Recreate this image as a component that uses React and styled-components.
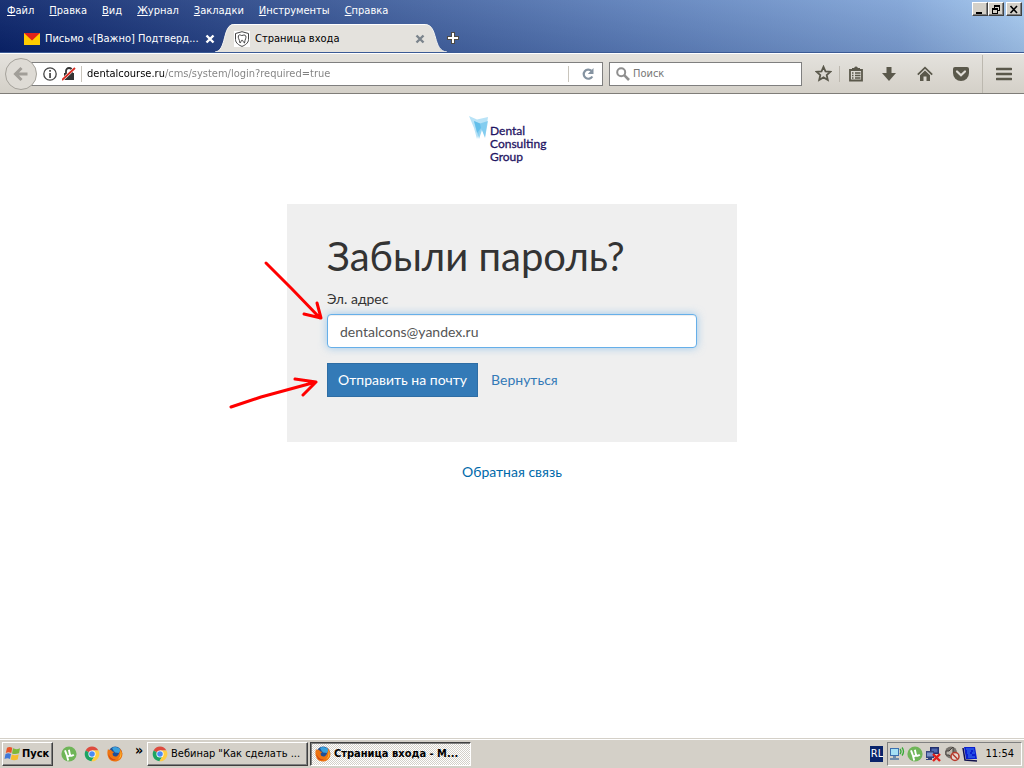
import React, { useState } from "react";
import styled, { createGlobalStyle, css } from "styled-components";

const uiFont = `"DejaVu Sans Condensed", "DejaVu Sans", sans-serif`;
const pageFont = `Lato, "Noto Sans", sans-serif`;

const GlobalStyle = createGlobalStyle`
    * { box-sizing: border-box; }
    body {
        margin: 0;
        background: #fff;
        font-family: ${pageFont};
        font-size: 14px;
        line-height: 20px;
        color: #333;
    }
    button, input { font: inherit; color: inherit; }
    svg { display: block; flex: none; }
`;

const raised = css`
    border: 1px solid;
    border-color: #fff #404040 #404040 #fff;
    box-shadow: inset -1px -1px 0 #808080;
`;

const Screen = styled.div`
    min-height: 100vh;
    display: flex;
    flex-direction: column;
`;

/* ---- browser ---- */

const Chrome = styled.header`
    font-family: ${uiFont};
    font-size: 11px;
    line-height: 14px;
`;
const TitleArea = styled.div`
    background:
        linear-gradient(to bottom, rgba(255, 255, 255, 0.07), rgba(0, 0, 40, 0.1)),
        linear-gradient(to right, #0a246a, #3a5998 35%, #5c7fba 62%, #7fa3d6 88%, #a6caf0);
    border-bottom: 1px solid #3b5a94;
`;
const MenuRow = styled.div`
    display: flex;
    justify-content: space-between;
    align-items: flex-start;
    height: 24px;
    padding: 2px 2px 0 7px;
`;
const Menu = styled.nav`
    display: flex;
    gap: 15px;
`;
const MenuItem = styled.button`
    padding: 2px 0 0;
    border: 0;
    background: none;
    color: #fff;

    &::first-letter { text-decoration: underline; }
`;
const WindowButtons = styled.div`
    display: flex;
`;
const WindowButton = styled.button`
    ${raised}
    width: 16px;
    height: 14px;
    padding: 0;
    margin-left: ${props => props.$apart ? "2px" : "0"};
    background: #d4d0c8;
    display: flex;
    align-items: center;
    justify-content: center;
`;
const Tabs = styled.div`
    display: flex;
    height: 28px;
`;
const Tab = styled.div`
    display: flex;
    align-items: center;
    gap: 5px;
    width: ${props => props.$active ? "191px" : "191px"};
    color: ${props => props.$active ? "#000" : "#fff"};
    background: ${props => props.$active ? "#e4e2dd" : "none"};
    border-top: 1px solid ${props => props.$active ? "#fff" : "transparent"};
`;
const FirstTab = styled(Tab)`
    margin-left: 24px;
`;
const TabTitle = styled.span`
    flex: 1;
    padding-top: 1px;
    overflow: hidden;
    white-space: nowrap;
`;
const PlainButton = styled.button`
    display: flex;
    align-items: center;
    justify-content: center;
    padding: 0;
    border: 0;
    background: none;
`;
const Toolbar = styled.div`
    display: flex;
    align-items: center;
    height: 41px;
    padding-left: 5px;
    border-top: 1px solid #fff;
    border-bottom: 1px solid #7f7d78;
    background: linear-gradient(to bottom, #e4e2dd, #d4d0c8);
`;
const BackButton = styled(PlainButton)`
    position: relative;
    width: 32px;
    height: 32px;
    border: 1px solid #a5a29b;
    border-radius: 50%;
    background: #dedbd5;
`;
const Field = styled.div`
    display: flex;
    align-items: center;
    height: 24px;
    border: 1px solid #7f7f7f;
    background: #fff;
`;
const UrlField = styled(Field)`
    flex: 1;
    margin-left: -6px;
    padding-left: 11px;
    gap: 5px;
`;
const SearchField = styled(Field)`
    width: 193px;
    margin-left: 6px;
    padding-left: 6px;
    gap: 3px;
`;
const FieldInput = styled.input`
    flex: 1;
    min-width: 0;
    padding: 1px 0 0;
    border: 0;
    outline: 0;
    background: none;

    &::placeholder { color: #777; opacity: 1; }
`;
const UrlInput = styled(FieldInput)`
    background: linear-gradient(to right, #000 77px, #808080 77px);
    background-clip: text;
    color: transparent;
`;
const Divider = styled.span`
    width: 1px;
    height: 16px;
    background: #c9c5bc;
`;
const ToolDivider = styled(Divider)`
    height: ${props => props.$tall ? "38px" : "16px"};
    margin-left: ${props => props.$tall ? "3px" : "0"};
    background: #bcb8af;
`;
const ReloadButton = styled(PlainButton)`
    width: 28px;
    height: 22px;
`;
const Tools = styled.div`
    display: flex;
    align-items: center;
    padding-left: 6px;
`;
const ToolButton = styled(PlainButton)`
    width: ${props => props.$wide ? "36px" : "31px"};
    height: 30px;
`;
const MenuButton = styled(ToolButton)`
    width: 41px;
`;

/* ---- page ---- */

const Page = styled.main`
    flex: 1;
    display: flex;
    flex-direction: column;
    align-items: center;
    padding: 21px 16px;
`;
const LogoLink = styled.a`
    margin-bottom: 41px;
`;
const Card = styled.form`
    position: relative;
    width: 100%;
    max-width: 450px;
    padding: 30px 40px 45px;
    margin-bottom: 20px;
    background: #efefef;
`;
const Title = styled.h1`
    margin: 0 0 10px;
    font-size: 40px;
    font-weight: 400;
    line-height: 45px;
`;
const Label = styled.label`
    display: block;
    margin-bottom: 5px;
`;
const EmailInput = styled.input`
    display: block;
    width: 100%;
    height: 34px;
    padding: 6px 12px;
    margin-bottom: 15px;
    border: 1px solid #66afe9;
    border-radius: 4px;
    outline: 0;
    background: #fff;
    color: #555;
    box-shadow: inset 0 1px 1px rgba(0, 0, 0, 0.075), 0 0 8px rgba(102, 175, 233, 0.6);
`;
const Actions = styled.div`
    display: flex;
    align-items: center;
    gap: 13px;
`;
const Submit = styled.button`
    min-width: 151px;
    height: 34px;
    padding: 0 10px;
    border: 1px solid #2e6da4;
    background: #337ab7;
    color: #fff;
`;
const Link = styled.a`
    color: ${props => props.$dark ? "#0069aa" : "#337ab7"};
    text-decoration: none;
`;
const Arrows = styled.svg`
    position: absolute;
    left: -60px;
    top: 50px;
    pointer-events: none;
`;

/* ---- taskbar ---- */

const Taskbar = styled.footer`
    display: flex;
    align-items: center;
    height: 30px;
    padding: 0 2px;
    border-top: 1px solid #d4d0c8;
    box-shadow: inset 0 1px 0 #fff;
    background: #d4d0c8;
    color: #000;
    font-family: ${uiFont};
    font-size: 11px;
    line-height: 14px;
`;
const StartButton = styled.button`
    ${raised}
    display: flex;
    align-items: center;
    gap: 1px;
    width: 51px;
    height: 24px;
    padding: 0 1px;
    background: #d4d0c8;
    font-weight: bold;
`;
const QuickLaunch = styled.div`
    display: flex;
    align-items: center;
    gap: 7px;
    margin: 0 8px;
`;
const More = styled(PlainButton)`
    width: 16px;
    height: 22px;
    align-items: flex-start;
    font-size: 14px;
    font-weight: bold;
`;
const TaskButton = styled.button`
    ${raised}
    display: flex;
    align-items: center;
    gap: 3px;
    width: 161px;
    height: 24px;
    padding: 0 4px;
    margin-right: 2px;
    background: #d4d0c8;
    white-space: nowrap;
    overflow: hidden;

    ${props => props.$pressed && css`
        border-color: #404040 #fff #fff #404040;
        box-shadow: inset 1px 1px 0 #808080;
        background: repeating-conic-gradient(#fff 0 25%, #d4d0c8 0 50%) 0 0 / 2px 2px;
        font-weight: bold;
    `}
`;
const Language = styled.span`
    width: 13px;
    height: 16px;
    margin: 0 4px 0 auto;
    background: #0a246a;
    color: #fff;
    line-height: 16px;
    text-align: center;
    overflow: hidden;
`;
const Tray = styled.div`
    display: flex;
    align-items: center;
    gap: 2px;
    height: 24px;
    padding: 0 7px 0 1px;
    border: 1px solid;
    border-color: #808080 #fff #fff #808080;
`;
const Clock = styled.time`
    margin-left: 5px;
`;

const CloseCross = ({ color }) => (
    <svg width="10" height="10" viewBox="0 0 10 10">
        <path d="M1.5 1.5 8.5 8.5M8.5 1.5 1.5 8.5" stroke={color} strokeWidth="2.4" />
    </svg>
);

const ChromeIcon = () => (
    <svg width="16" height="16" viewBox="0 0 16 16">
        <path d="M8 8 1.6 4.4A7.3 7.3 0 0 1 14.4 4.4H8Z" fill="#dd4b3e" />
        <path d="M8 8 1.6 4.4A7.3 7.3 0 0 0 7.4 15.2L11 9.5Z" fill="#1da462" />
        <path d="M8 4.4H14.4A7.3 7.3 0 0 1 7.4 15.2L11.2 9Z" fill="#ffcd42" />
        <circle cx="8" cy="8" r="3.6" fill="#fff" />
        <circle cx="8" cy="8" r="2.8" fill="#4a8af4" />
    </svg>
);

const FirefoxIcon = () => (
    <svg width="16" height="16" viewBox="0 0 16 16">
        <circle cx="8.2" cy="7.6" r="7" fill="#1f4f96" />
        <path d="M5 1.8A7 7 0 0 1 13.8 4L12 7 8 6.5 6 4Z" fill="#3aa0dc" />
        <path d="M1 3 2.2 4.2 4 3.5 5 5.2 7.2 6 5.5 7.5 6 9.5C8 11.5 10.5 10.5 11.5 8.5L13 5 12.8 2.6C16.5 6 16 11 13 13.7C9.5 16.6 4 16 1.7 12.2C.2 9.5 0 6 1 3Z" fill="#ee7410" />
        <path d="M13.5 4.5C15.5 8 14 12 11 13.5C13.5 11 14 8 13.5 4.5Z" fill="#ffcb3c" />
        <path d="M1.5 8C2.5 11.5 5 13.5 9 13.6C5.5 15.5 1.5 12.5 1.5 8Z" fill="#c9421a" />
    </svg>
);

const TorrentIcon = () => (
    <svg width="16" height="16" viewBox="0 0 16 16">
        <circle cx="8" cy="8" r="7.6" fill="#6fb558" />
        <path d="M4 4.3 5.8 9.2C6.4 10.7 9 10.5 8.9 8.5L7.9 3.7M8.9 8.5C9.5 10.5 11.5 9.8 12.8 8.8M6 9.8 7.2 14.5" fill="none" stroke="#fff" strokeWidth="1.9" />
    </svg>
);

const WindowsFlag = () => (
    <svg width="17" height="16" viewBox="0 0 17 16">
        <path d="M3 1.8Q5.5 .3 8.3 1.8L7.3 7Q4.500 5.600 1.800 7Z" fill="#e8542a" />
        <path d="M9 2.300Q12 4 16 2.200L15 7.300Q11 8.800 8 7.400Z" fill="#7cb83a" />
        <path d="M1.500 8Q4.300 6.600 7 8L6 13Q3.500 11.600 .5 13Z" fill="#3f78d8" />
        <path d="M7.800 8.500Q11 9.800 14.700 8.400L13.700 13.600Q10 15 6.700 13.500Z" fill="#f6bd2c" />
    </svg>
);

const Logo = () => (
    <svg width="86" height="48" viewBox="0 0 86 48" role="img" aria-label="Dental Consulting Group">
        <path d="M0 1 8 4.5 19 2 16 22 12 13 8 24 5 13Z" fill="#b9e3f7" />
        <path d="M5 6 11 8.5 19 6 16 23 13 15 10 24Z" fill="#6cc3ec" opacity=".7" />
        <path d="M5 6 11 8.5 12 13 8 18Z" fill="#4fb5e6" opacity=".6" />
        <g fill="#1f1463" stroke="#1f1463" strokeWidth=".3" fontFamily="Lato, sans-serif" fontSize="12">
            <text x="21" y="20">Dental</text>
            <text x="21" y="33">Consulting</text>
            <text x="21" y="46">Group</text>
        </g>
    </svg>
);

const App = () => {
    const [url, setUrl] = useState("dentalcourse.ru/cms/system/login?required=true");
    const [email, setEmail] = useState("dentalcons@yandex.ru");
    const menus = ["Файл", "Правка", "Вид", "Журнал", "Закладки", "Инструменты", "Справка"];
    const tool = "#5a584b";

    return (
        <Screen>
            <GlobalStyle />
            <Chrome>
                <TitleArea>
                    <MenuRow>
                        <Menu>
                            {menus.map(name => <MenuItem key={name}>{name}</MenuItem>)}
                        </Menu>
                        <WindowButtons>
                            <WindowButton aria-label="Свернуть">
                                <svg width="10" height="9"><path d="M1 7H7V9H1Z" /></svg>
                            </WindowButton>
                            <WindowButton aria-label="Восстановить">
                                <svg width="10" height="9" fill="none" stroke="#000" shapeRendering="crispEdges">
                                    <path d="M3.5 3V.5H8.5V5.5H7M3 1.5H9M1.5 3.5H6.5V8.5H1.5ZM1 4.5H7" />
                                </svg>
                            </WindowButton>
                            <WindowButton $apart aria-label="Закрыть">
                                <svg width="10" height="9"><path d="M1.5 1 8 8M8 1 1.5 8" stroke="#000" strokeWidth="1.6" /></svg>
                            </WindowButton>
                        </WindowButtons>
                    </MenuRow>
                    <Tabs>
                        <FirstTab>
                            <svg width="16" height="16" viewBox="0 0 16 16">
                                <path d="M0 2H16V14H0Z" fill="#fc0" />
                                <path d="M0 2H16L8 9.5Z" fill="#e2231a" />
                            </svg>
                            <TabTitle>Письмо «[Важно] Подтверд...</TabTitle>
                            <PlainButton aria-label="Закрыть вкладку"><CloseCross color="#fff" /></PlainButton>
                        </FirstTab>
                        <svg width="19" height="28" viewBox="0 0 19 28">
                            <path d="M0 28C12 27 7 0 19 0V28Z" fill="#e4e2dd" />
                            <path d="M0 28C12 27 7 .5 19 .5" fill="none" stroke="#f4f4f2" />
                        </svg>
                        <Tab $active>
                            <svg width="16" height="16" viewBox="0 0 16 16" fill="none" stroke="#444">
                                <path d="M0 0H16V16H0Z" fill="#fff" stroke="none" />
                                <path d="M8 .7 14.5 2.5V8.500C14.500 12 11 14.300 8 15.400C5 14.300 1.500 12 1.500 8.500V2.500Z" />
                                <path d="M4.500 4.500C6 3 7 4.800 8 4.500C9.500 4 11 3.500 11.800 5C12.500 7 11 8 10.500 12C9.500 12 9 9 8 9C7 9 7 12 6 12C5.500 8 3.500 7 4.500 4.500Z" />
                            </svg>
                            <TabTitle>Страница входа</TabTitle>
                            <PlainButton aria-label="Закрыть вкладку"><CloseCross color="#7b848c" /></PlainButton>
                        </Tab>
                        <svg width="22" height="28" viewBox="0 0 22 28">
                            <path d="M0 0C14 1 7 27 22 28H0Z" fill="#e4e2dd" />
                            <path d="M0 .5C14 1 7 27 22 28" fill="none" stroke="#f4f4f2" />
                        </svg>
                        <PlainButton aria-label="Новая вкладка">
                            <svg width="12" height="12" viewBox="0 0 12 12">
                                <path d="M6 0V12M0 6H12" stroke="#4d4a46" strokeWidth="4" />
                                <path d="M6 1V11M1 6H11" stroke="#fff" strokeWidth="2" />
                            </svg>
                        </PlainButton>
                    </Tabs>
                </TitleArea>

                <Toolbar>
                    <BackButton aria-label="Назад">
                        <svg width="16" height="16" viewBox="0 0 16 16">
                            <path d="M8.5 2 2.5 8 8.5 14M3 8H14.5" fill="none" stroke="#a19e98" strokeWidth="3" />
                        </svg>
                    </BackButton>
                    <UrlField>
                        <svg width="14" height="14" viewBox="0 0 14 14">
                            <circle cx="7" cy="7" r="6.2" fill="none" stroke="#444" strokeWidth="1.3" />
                            <path d="M6.2 3H7.9V4.7H6.2ZM6.2 6H7.9V11H6.2Z" fill="#444" />
                        </svg>
                        <svg width="14" height="14" viewBox="0 0 14 14">
                            <path d="M2 6H12V13H2Z" fill="#333" />
                            <path d="M4 6V4A3 3 0 0 1 10 4V6" fill="none" stroke="#333" strokeWidth="1.8" />
                            <path d="M0 13 13 1" stroke="#fff" strokeWidth="3" />
                            <path d="M0 13 13 1" stroke="#d92b21" strokeWidth="1.8" />
                        </svg>
                        <Divider />
                        <UrlInput aria-label="Адрес" value={url} onChange={e => setUrl(e.target.value)} />
                        <Divider />
                        <ReloadButton aria-label="Обновить">
                            <svg width="14" height="14" viewBox="0 0 14 14">
                                <path d="M11.3 9.5A4.6 4.6 0 1 1 10.5 3.8" fill="none" stroke="#8593a1" strokeWidth="2.2" />
                                <path d="M12.5 1V7H6.8Z" fill="#8593a1" />
                            </svg>
                        </ReloadButton>
                    </UrlField>
                    <SearchField>
                        <svg width="14" height="14" viewBox="0 0 14 14" fill="none" stroke="#8f8f8f">
                            <circle cx="5.2" cy="5.2" r="4" strokeWidth="2" />
                            <path d="M8.2 8.2 13 13" strokeWidth="2.6" />
                        </svg>
                        <FieldInput aria-label="Поиск" placeholder="Поиск" />
                    </SearchField>
                    <Tools>
                        <ToolButton aria-label="Добавить в закладки">
                            <svg width="17" height="17" viewBox="0 0 17 17">
                                <path d="M8.5 1.8 10.5 6.3 15.4 6.8 11.7 10.1 12.8 15 8.5 12.4 4.2 15 5.3 10.1 1.6 6.8 6.5 6.3Z" fill="none" stroke={tool} strokeWidth="1.8" />
                            </svg>
                        </ToolButton>
                        <ToolDivider />
                        <ToolButton aria-label="Закладки">
                            <svg width="16" height="16" viewBox="0 0 16 16" fill="none" stroke={tool}>
                                <path d="M2 4H14V14.5H2Z" strokeWidth="1.8" />
                                <path d="M4 4V2H6Q8-.8 10 2H12V4Z" fill={tool} stroke="none" />
                                <path d="M4 7H5.5M7 7H12.5M4 9.5H5.5M7 9.5H12.5M4 12H5.5M7 12H12.5" strokeWidth="1.3" />
                            </svg>
                        </ToolButton>
                        <ToolButton $wide aria-label="Загрузки">
                            <svg width="16" height="16" viewBox="0 0 16 16">
                                <path d="M5.5 1H10.5V7H15L8 15 1 7H5.5Z" fill={tool} />
                            </svg>
                        </ToolButton>
                        <ToolButton $wide aria-label="Домой">
                            <svg width="16" height="16" viewBox="0 0 16 16">
                                <path d="M.8 8.6 8 1.7 15.2 8.6" fill="none" stroke={tool} strokeWidth="1.8" />
                                <path d="M8 4.5 13 9.3V15H9.5V10.5H6.5V15H3V9.3Z" fill={tool} />
                            </svg>
                        </ToolButton>
                        <ToolButton $wide aria-label="Pocket">
                            <svg width="16" height="16" viewBox="0 0 16 16">
                                <path d="M2 1H14Q16 1 16 3V7A8 8 0 0 1 0 7V3Q0 1 2 1Z" fill={tool} />
                                <path d="M4 5.5 8 9.3 12 5.5" fill="none" stroke="#e0ddd7" strokeWidth="2.2" strokeLinecap="round" />
                            </svg>
                        </ToolButton>
                        <ToolDivider $tall />
                        <MenuButton aria-label="Меню">
                            <svg width="16" height="14" viewBox="0 0 16 14">
                                <path d="M1 2H15M1 7H15M1 12H15" stroke={tool} strokeWidth="2.6" strokeLinecap="round" />
                            </svg>
                        </MenuButton>
                    </Tools>
                </Toolbar>
            </Chrome>

            <Page>
                <LogoLink href="#"><Logo /></LogoLink>
                <Card onSubmit={e => e.preventDefault()}>
                    <Title>Забыли пароль?</Title>
                    <Label htmlFor="email">Эл. адрес</Label>
                    <EmailInput id="email" type="email" value={email} onChange={e => setEmail(e.target.value)} />
                    <Actions>
                        <Submit type="submit">Отправить на почту</Submit>
                        <Link href="#">Вернуться</Link>
                    </Actions>
                    <Arrows width="100" height="160" viewBox="227 254 100 160" fill="none" stroke="#f00" strokeWidth="3" strokeLinecap="round" strokeLinejoin="round">
                        <path d="M266 263 292 289 320 318M317 303 321 318 304 314" />
                        <path d="M231 407 261 397 316 382M295 379 316 382 303 395" />
                    </Arrows>
                </Card>
                <Link $dark href="#">Обратная связь</Link>
            </Page>

            <Taskbar>
                <StartButton><WindowsFlag />Пуск</StartButton>
                <QuickLaunch>
                    <TorrentIcon />
                    <ChromeIcon />
                    <FirefoxIcon />
                </QuickLaunch>
                <More aria-label="Ещё">»</More>
                <TaskButton><ChromeIcon />Вебинар "Как сделать ...</TaskButton>
                <TaskButton $pressed><FirefoxIcon />Страница входа - M...</TaskButton>
                <Language>RL</Language>
                <Tray>
                    <svg width="16" height="16" viewBox="0 0 16 16">
                        <path d="M1 2H10V10H1Z" fill="#3c6fae" />
                        <path d="M2 3H9V9H2Z" fill="#a5e0f5" />
                        <path d="M4 10H7V12H10V14H1V12H4Z" fill="#6f8cab" />
                        <path d="M11 3Q13 5.5 11 8M13 1.5Q16 5.5 13 9.5" fill="none" stroke="#35a935" strokeWidth="1.3" />
                    </svg>
                    <TorrentIcon />
                    <svg width="17" height="16" viewBox="0 0 17 16">
                        <path d="M5 1H14V8H5Z" fill="#22306f" />
                        <path d="M6.5 2.5H12.5V6.5H6.5Z" fill="#5069b0" />
                        <path d="M1 5H9V12H1ZM3 12H7V14H1V13H3Z" fill="#33447e" />
                        <path d="M2 6.5H8V10.5H2Z" fill="#7d93c9" />
                        <path d="M8 8 15 15M15 8 8 15" stroke="#e0201b" strokeWidth="2.4" />
                    </svg>
                    <svg width="16" height="16" viewBox="0 0 16 16">
                        <circle cx="7" cy="6.5" r="6" fill="#77736d" />
                        <path d="M2 5H5L9 1V12L5 9H2Z" fill="#bbb7ae" stroke="#45413c" />
                        <circle cx="11" cy="10.5" r="4" fill="#e5d7d2" stroke="#b6392b" strokeWidth="1.5" />
                        <path d="M8.5 8 13.5 13" stroke="#b6392b" strokeWidth="1.5" />
                    </svg>
                    <svg width="16" height="16" viewBox="0 0 16 16">
                        <path d="M2 1 13 1 15 13 4 13Z" fill="#0a1fd0" />
                        <path d="M1 2 3 14 15 15" fill="none" stroke="#10104c" strokeWidth="1.5" />
                        <path d="M4 3H12M5 5H9M11 5H12.5M5 7H8M10 7H13M6 9H10M6 11H13" stroke="#3d7cf5" />
                    </svg>
                    <Clock>11:54</Clock>
                </Tray>
            </Taskbar>
        </Screen>
    );
};

export default App;
